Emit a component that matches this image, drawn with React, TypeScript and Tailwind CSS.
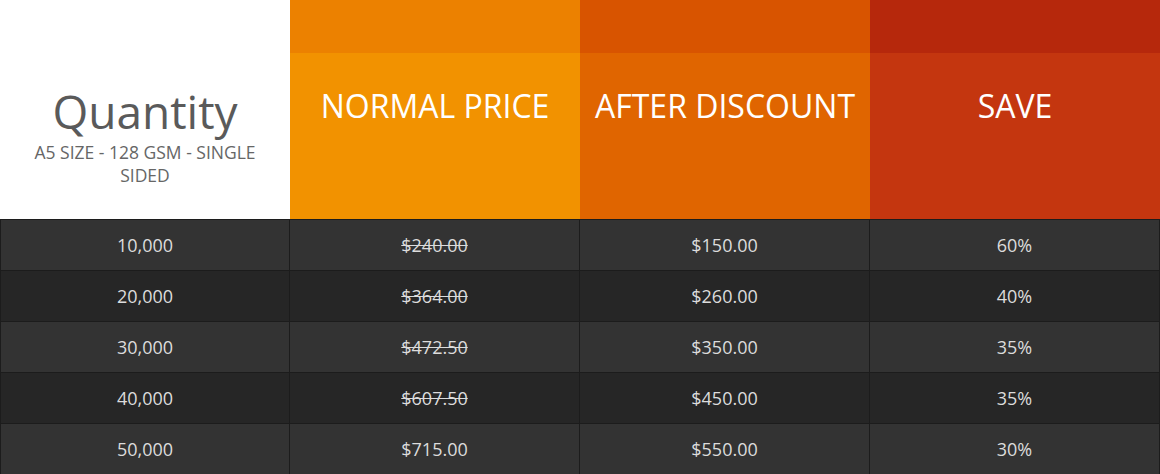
const rows = [
  { qty: "10,000", normal: "$240.00", after: "$150.00", save: "60%", strike: true },
  { qty: "20,000", normal: "$364.00", after: "$260.00", save: "40%", strike: true },
  { qty: "30,000", normal: "$472.50", after: "$350.00", save: "35%", strike: true },
  { qty: "40,000", normal: "$607.50", after: "$450.00", save: "35%", strike: true },
  { qty: "50,000", normal: "$715.00", after: "$550.00", save: "30%", strike: false },
];

const heads = [
  { label: "NORMAL PRICE", top: "bg-[#ec8100]", body: "bg-[#f29200]" },
  { label: "AFTER DISCOUNT", top: "bg-[#d85400]", body: "bg-[#e06500]" },
  { label: "SAVE", top: "bg-[#b6280c]", body: "bg-[#c4360f]" },
];

export default function App() {
  return (
    <div className="w-[1160px] h-[474px] overflow-hidden bg-white font-['Open_Sans',sans-serif]">
      <div className="grid grid-cols-4 h-[219px]">
        <div className="flex flex-col items-center bg-white pt-[86px] text-[#5a5a5a]">
          <h2 className="text-[46px] leading-[50px]">Quantity</h2>
          <p className="mt-[5px] px-6 text-center text-[17.5px] leading-[23px] text-[#666]">
            A5 SIZE - 128 GSM - SINGLE SIDED
          </p>
        </div>
        {heads.map((h) => (
          <div key={h.label} className={`flex flex-col ${h.body}`}>
            <div className={`h-[53px] ${h.top}`} />
            <div className="pt-[31px] text-center text-[32px] leading-[44px] text-white">
              {h.label}
            </div>
          </div>
        ))}
      </div>
      {rows.map((r, i) => (
        <div
          key={r.qty}
          className={`grid grid-cols-4 h-[51px] border-t border-[#1c1c1c] text-[18px] text-[#dcdcdc] ${
            i % 2 === 0 ? "bg-[#333333]" : "bg-[#262626]"
          }`}
        >
          <div className="flex items-center justify-center border-l border-r border-[#1c1c1c]">{r.qty}</div>
          <div className="flex items-center justify-center border-r border-[#1c1c1c]">
            <span className={r.strike ? "line-through" : ""}>{r.normal}</span>
          </div>
          <div className="flex items-center justify-center border-r border-[#1c1c1c]">{r.after}</div>
          <div className="flex items-center justify-center border-r border-[#1c1c1c]">{r.save}</div>
        </div>
      ))}
    </div>
  );
}
